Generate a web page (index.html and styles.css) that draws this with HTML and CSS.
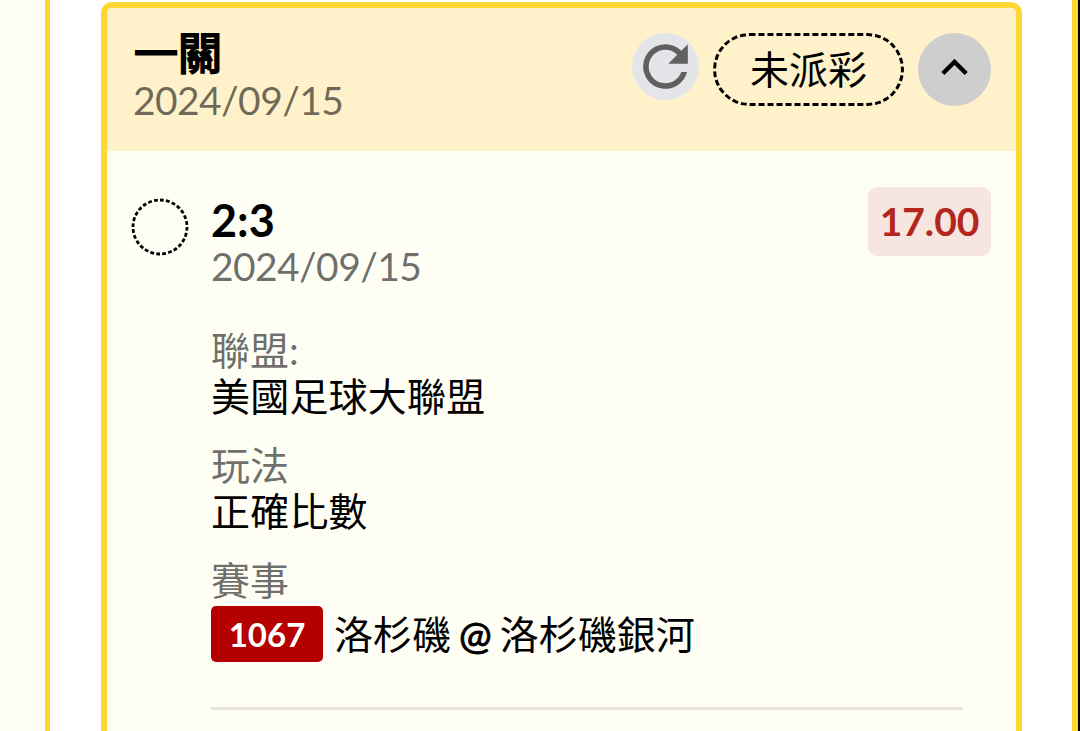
FILE: index.html
```html
<!DOCTYPE html>
<html lang="zh-Hant">
<head>
    <meta charset="UTF-8">
    <meta name="viewport" content="width=device-width, initial-scale=1.0">
    <title>一關</title>
    <link rel="stylesheet" href="styles.css">
</head>
<body>
    <div class="page">
        <div class="side"></div>
        <div class="panel">
            <div class="card">
                <div class="card-header">
                    <div class="heading">
                        <div class="title">一關</div>
                        <div class="date">2024/09/15</div>
                    </div>
                    <button class="refresh">
                        <svg width="67" height="67" viewBox="0 0 24 24">
                            <path d="M17.65 6.35A7.96 7.96 0 0 0 12 4a8 8 0 1 0 7.73 10h-2.08A6 6 0 1 1 12 6c1.66 0 3.14.69 4.22 1.78L13 11h7V4z" fill="#606060"/>
                        </svg>
                    </button>
                    <div class="status">未派彩</div>
                    <button class="toggle">
                        <svg width="53" height="53" viewBox="0 0 24 24">
                            <path d="M7.41 15.41L12 10.83l4.59 4.58L18 14l-6-6-6 6z" fill="#000"/>
                        </svg>
                    </button>
                </div>
                <div class="bet">
                    <svg class="circle" width="58" height="58" viewBox="0 0 58 58">
                        <circle cx="29" cy="29" r="27" fill="none" stroke="#000" stroke-width="2.8" pathLength="112" stroke-dasharray="2.5 1.5"/>
                    </svg>
                    <div class="info">
                        <div class="top">
                            <div>
                                <div class="score">2:3</div>
                                <div class="date">2024/09/15</div>
                            </div>
                            <div class="odds">17.00</div>
                        </div>
                        <div class="field">
                            <div class="label">聯盟:</div>
                            <div class="value">美國足球大聯盟</div>
                        </div>
                        <div class="field">
                            <div class="label">玩法</div>
                            <div class="value">正確比數</div>
                        </div>
                        <div class="field">
                            <div class="label">賽事</div>
                            <div class="match">
                                <span class="number">1067</span>
                                <span>洛杉磯</span>
                                <span class="at">@</span>
                                <span>洛杉磯銀河</span>
                            </div>
                        </div>
                        <hr>
                    </div>
                </div>
            </div>
        </div>
    </div>
</body>
</html>
```

FILE: styles.css
```css
* { box-sizing: border-box; }
body { margin: 0; overflow: hidden; background: #fff; color: #000; font-family: Lato, "Noto Sans CJK TC", sans-serif; font-size: 39px; line-height: 46px; }
button { padding: 0; border: none; cursor: pointer; }
svg { display: block; }

.page { display: flex; height: 731px; }
.side { width: 50px; background: #fffef5; border-right: 5px solid #fdd835; }
.panel { flex: 1; padding: 2px 50px 0 51px; border-right: 6px solid #fdd835; }
.page::after { content: ""; width: 2px; background: #000; }

.card { width: 921px; height: 760px; border: 6px solid #fdd835; border-radius: 11px; background: #fffef5; overflow: hidden; }
.card-header { display: flex; gap: 14px; height: 143px; padding: 25px 25px 0 26px; background: #fff2cb; }
.heading { flex: 1; }
.title { height: 45px; margin-top: -1px; padding-left: 1px; font-size: 44px; line-height: 42px; -webkit-text-stroke: 2px #000; }
.date { color: rgba(0, 0, 0, 0.58); letter-spacing: -0.6px; }

.refresh { width: 67px; height: 67px; border-radius: 50%; background: #e4e5e9; }
.status { width: 191px; height: 73px; border: 3px dashed #000; border-radius: 37px; line-height: 67px; text-align: center; }
.toggle { display: flex; justify-content: center; width: 73px; height: 73px; padding-top: 8px; border-radius: 50%; background: #cecece; }

.bet { display: flex; gap: 22px; padding: 35px 25px 0 24px; }
.circle { margin-top: 12px; }
.info { flex: 1; }
.top { display: flex; justify-content: space-between; height: 141px; }
.score { height: 52px; margin-top: 5px; font-size: 45px; font-weight: 700; line-height: 59px; }
.odds { width: 123px; height: 69px; margin-top: 0.5px; border-radius: 9px; background: #f7e6df; color: #b3261e; font-weight: 700; line-height: 68px; text-align: center; }

.field { margin-bottom: 23px; }
.label { color: rgba(0, 0, 0, 0.58); }
.value { letter-spacing: 0.2px; }
.match { display: flex; align-items: center; height: 56px; margin-top: 3px; }
.number { width: 112px; height: 56px; margin-right: 11px; border-radius: 5px; background: #b50000; color: #fff; font-size: 33px; font-weight: 700; line-height: 57px; text-align: center; }
.at { margin: 0 8px; -webkit-text-stroke: 0.9px #000; }
hr { width: 752px; height: 3px; margin: 45px 0 0; border: none; background: #e7e3de; }
```
